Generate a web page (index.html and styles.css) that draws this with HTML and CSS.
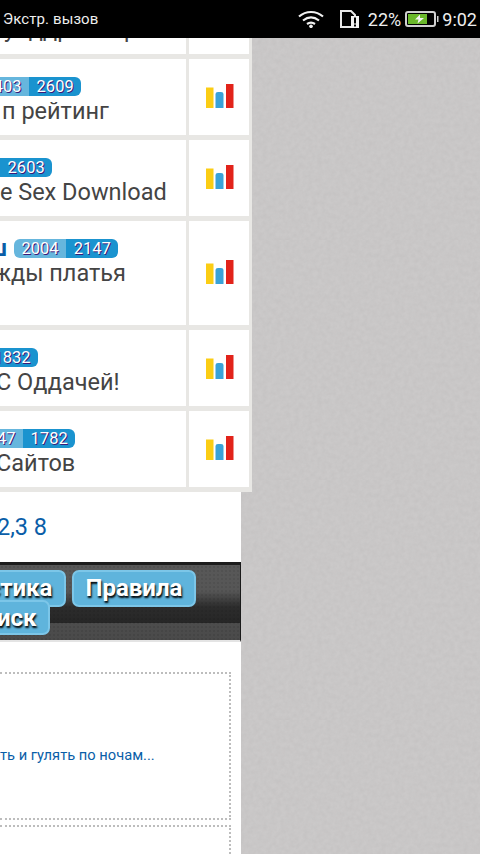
FILE: index.html
```html
<!DOCTYPE html>
<html lang="ru">
<head>
  <meta charset="UTF-8" />
  <title>Каталог сайтов</title>
  <link rel="stylesheet" href="styles.css">
</head>
<body>
  <!-- Android status bar -->
  <div class="status">
    <span class="carrier">Экстр. вызов</span>
    <div class="status-right">
      <svg class="ic-wifi" width="26" height="18" viewBox="0 0 26 18">
        <g fill="none" stroke="#f2f2f2" stroke-width="2.2">
          <path d="M1 6.5C8 .5 18 .5 25 6.5" />
          <path d="M5 10.5C10 6.5 16 6.5 21 10.5" />
          <path d="M9 14C11.500 12.300 14.500 12.300 17 14" />
        </g>
        <circle cx="13" cy="16.300" r="1.800" fill="#f2f2f2" />
      </svg>
      <svg class="ic-sim" width="20" height="18" viewBox="0 0 20 18">
        <path d="M1 1H11L15 5V17H1Z" fill="none" stroke="#e8e8e8" stroke-width="2" />
        <rect x="11" y="6" width="8" height="12" fill="#f2f2f2" />
        <rect x="14" y="7.500" width="2" height="6" fill="#000" />
        <rect x="14" y="14.500" width="2" height="2" fill="#000" />
      </svg>
      <span class="percent">22%</span>
      <svg class="ic-battery" width="34" height="16" viewBox="0 0 34 16">
        <rect x="1" y="1" width="29" height="14" rx="2" fill="none" stroke="#d0d0d0" stroke-width="2" />
        <rect x="3" y="3" width="19" height="10" fill="#6ab82a" />
        <path d="M15 3.500L10 8.500H13.500L12.500 12.500L19 7H15Z" fill="#f4f4f4" />
        <rect x="32" y="5" width="1.500" height="6" fill="#d0d0d0" />
      </svg>
      <span class="clock">9:02</span>
    </div>
  </div>

  <div class="list">
    <div class="row row-cut">
      <div class="cell"><div class="cut-title">унддроооор</div></div>
      <div class="cell"></div>
    </div>

    <div class="row">
      <div class="cell info">
        <div class="meta shift-a">
          <span class="badge"><b class="in">2403</b><b class="out">2609</b></span>
        </div>
        <div class="title shift-b">п рейтинг</div>
      </div>
      <div class="cell chart">
        <svg width="28" height="24" viewBox="0 0 28 24"><rect y="3.500" width="7.500" height="20.500" fill="#fbcd14" /><path d="M9.500 24V10Q9.500 8 12 8H15Q17.500 8 17.500 10V24Z" fill="#3aa2d8" /><rect x="20" width="7.500" height="24" fill="#e2231a" /></svg>
      </div>
    </div>

    <div class="row">
      <div class="cell info">
        <div class="meta shift-c">
          <span class="badge"><b class="in">2500</b><b class="out">2603</b></span>
        </div>
        <div class="title shift-d">Free Sex Download</div>
      </div>
      <div class="cell chart">
        <svg width="28" height="24" viewBox="0 0 28 24"><rect y="3.500" width="7.500" height="20.500" fill="#fbcd14" /><path d="M9.500 24V10Q9.500 8 12 8H15Q17.500 8 17.500 10V24Z" fill="#3aa2d8" /><rect x="20" width="7.500" height="24" fill="#e2231a" /></svg>
      </div>
    </div>

    <div class="row row-tall">
      <div class="cell info">
        <div class="meta shift-e">
          <a class="name">ш</a>
          <span class="badge"><b class="in">2004</b><b class="out">2147</b></span>
        </div>
        <div class="title shift-f">жды платья</div>
      </div>
      <div class="cell chart">
        <svg width="28" height="24" viewBox="0 0 28 24"><rect y="3.500" width="7.500" height="20.500" fill="#fbcd14" /><path d="M9.500 24V10Q9.500 8 12 8H15Q17.500 8 17.500 10V24Z" fill="#3aa2d8" /><rect x="20" width="7.500" height="24" fill="#e2231a" /></svg>
      </div>
    </div>

    <div class="row">
      <div class="cell info">
        <div class="meta shift-g">
          <span class="badge"><b class="out">1832</b></span>
        </div>
        <div class="title shift-h">С Оддачей!</div>
      </div>
      <div class="cell chart">
        <svg width="28" height="24" viewBox="0 0 28 24"><rect y="3.500" width="7.500" height="20.500" fill="#fbcd14" /><path d="M9.500 24V10Q9.500 8 12 8H15Q17.500 8 17.500 10V24Z" fill="#3aa2d8" /><rect x="20" width="7.500" height="24" fill="#e2231a" /></svg>
      </div>
    </div>

    <div class="row">
      <div class="cell info">
        <div class="meta shift-i">
          <span class="badge"><b class="in">1647</b><b class="out">1782</b></span>
        </div>
        <div class="title shift-j">Сайтов</div>
      </div>
      <div class="cell chart">
        <svg width="28" height="24" viewBox="0 0 28 24"><rect y="3.500" width="7.500" height="20.500" fill="#fbcd14" /><path d="M9.500 24V10Q9.500 8 12 8H15Q17.500 8 17.500 10V24Z" fill="#3aa2d8" /><rect x="20" width="7.500" height="24" fill="#e2231a" /></svg>
      </div>
    </div>
  </div>

  <div class="content">
    <div class="pages">2,3 8</div>

    <div class="nav">
      <div class="nav-line">
        <a class="btn btn-stat">Статистика</a>
        <a class="btn">Правила</a>
      </div>
      <div class="nav-line nav-line-2">
        <a class="btn btn-search">Поиск</a>
      </div>
    </div>

    <div class="box box-first">
      <a class="box-link">ть и гулять по ночам...</a>
    </div>
    <div class="box"></div>
  </div>
</body>
</html>
```

FILE: styles.css
```css
* {
  box-sizing: border-box;
}

html,
body {
  height: 854px;
  overflow: hidden;
}

body {
  margin: 0;
  font-family: Roboto, "Liberation Sans", sans-serif;
  color: #444;
  background-color: #cbc9c9;
  background-image: url("data:image/svg+xml,%3Csvg xmlns='http://www.w3.org/2000/svg' width='240' height='240'%3E%3Cfilter id='n'%3E%3CfeTurbulence type='fractalNoise' baseFrequency='.22' numOctaves='2' stitchTiles='stitch'/%3E%3CfeColorMatrix values='0 0 0 0 .45 0 0 0 0 .44 0 0 0 0 .44 .4 0 0 0 -.1'/%3E%3C/filter%3E%3Crect width='240' height='240' filter='url(%23n)'/%3E%3C/svg%3E");
}

/* status bar */
.status {
  height: 38px;
  background: #000;
  color: #eee;
  display: flex;
  justify-content: space-between;
  align-items: center;
  padding: 0 3px;
}

.carrier {
  font-size: 15px;
  letter-spacing: 0.1px;
}

.status-right {
  display: flex;
  align-items: center;
  font-size: 18px;
}

.ic-wifi {
  margin-right: 16px;
}

.ic-sim {
  margin-right: 8px;
}

.percent {
  margin-right: 4px;
}

.ic-battery {
  margin-right: 3px;
}

/* rating list */
.list {
  width: 252px;
  background: #e8e7e4;
  padding-bottom: 5px;
}

.row {
  display: grid;
  grid-template-columns: 186px 60px;
  column-gap: 3px;
  height: 76px;
  margin-bottom: 5px;
}

.row:last-child {
  margin-bottom: 0;
}

.row-cut {
  height: 16px;
}

.row-tall {
  height: 104px;
}

.cell {
  background: #fff;
  overflow: hidden;
}

.cut-title {
  font-size: 23.500px;
  line-height: 28px;
  margin: -23px 0 0 4px;
  white-space: nowrap;
  color: #444;
}

.info {
  padding-top: 18px;
  white-space: nowrap;
}

.meta {
  display: flex;
  align-items: center;
  height: 19px;
}

.title {
  font-size: 23.500px;
  line-height: 28px;
  margin-top: 1px;
  color: #444;
}

.name {
  font-size: 23px;
  font-weight: bold;
  color: #0a5ea8;
  margin-right: 7px;
}

.badge {
  display: inline-flex;
  flex-shrink: 0;
  height: 19px;
  border-radius: 6px;
  overflow: hidden;
  font-size: 16.500px;
  line-height: 19px;
  color: #fff;
  text-shadow: 1px 1px 0 #3b1a78;
}

.badge b {
  font-weight: normal;
  padding: 0 7.500px;
}

.in {
  background: #66b6dd;
}

.out {
  background: #1a93cf;
}

/* the page is scrolled sideways, so each line starts somewhere left of the edge */
.shift-a { margin-left: -23px; }
.shift-b { margin-left: 2px; }
.shift-c { margin-left: -52px; }
.shift-d { margin-left: -33px; }
.shift-e { margin-left: -12px; }
.shift-f { margin-left: -7px; }
.shift-g { margin-left: -14px; }
.shift-h { margin-left: -4px; }
.shift-i { margin-left: -29px; }
.shift-j { margin-left: -4px; }

.chart {
  display: flex;
  justify-content: center;
  align-items: center;
  padding: 0 0 2px 2px;
}

/* lower white part */
.content {
  width: 241px;
  background: #fff;
  height: 362px;
  overflow: hidden;
}

.pages {
  height: 70px;
  font-size: 23.500px;
  line-height: 70px;
  color: #0a5ea8;
  margin-left: -3px;
}

.nav {
  height: 80px;
  border-top: 3px solid #1c1c1c;
  border-right: 1px solid #1a1a1a;
  border-bottom: 2px solid #e4e4e4;
  padding-top: 5px;
  background-color: #4b4b4b;
  background-image:
    radial-gradient(rgba(0, 0, 0, 0.1) 0.6px, transparent 1px),
    linear-gradient(#585858 0, #565656 26px, #2c2c2c 42px, #262626 58px, #4d4d4d 58px, #4a4a4a 75px);
  background-size: 4px 4px, 100% 100%;
}

.nav-line {
  display: flex;
  gap: 6px;
  white-space: nowrap;
}

.nav-line-2 {
  margin-top: -7px;
}

.btn {
  flex-shrink: 0;
  height: 37px;
  padding: 0 11.500px;
  border: 2px solid #7cc6e8;
  border-radius: 7px;
  background: #5fb4dc;
  color: #fff;
  font-size: 24px;
  font-weight: bold;
  line-height: 33px;
  text-shadow: 1px 2px 2px #000;
}

.btn-stat {
  margin-left: -92px;
}

.btn-search {
  height: 35px;
  margin-left: -47px;
}

/* dotted news boxes */
.box {
  width: 231px;
  height: 148px;
  border: 2px dotted #bdbdbd;
  border-left: 0;
  white-space: nowrap;
}

.box + .box {
  margin-top: 5px;
}

.box-first {
  margin-top: 30px;
  display: flex;
  align-items: center;
  padding-top: 17px;
}

.box-link {
  font-size: 14.700px;
  color: #0a5ea8;
}
```
